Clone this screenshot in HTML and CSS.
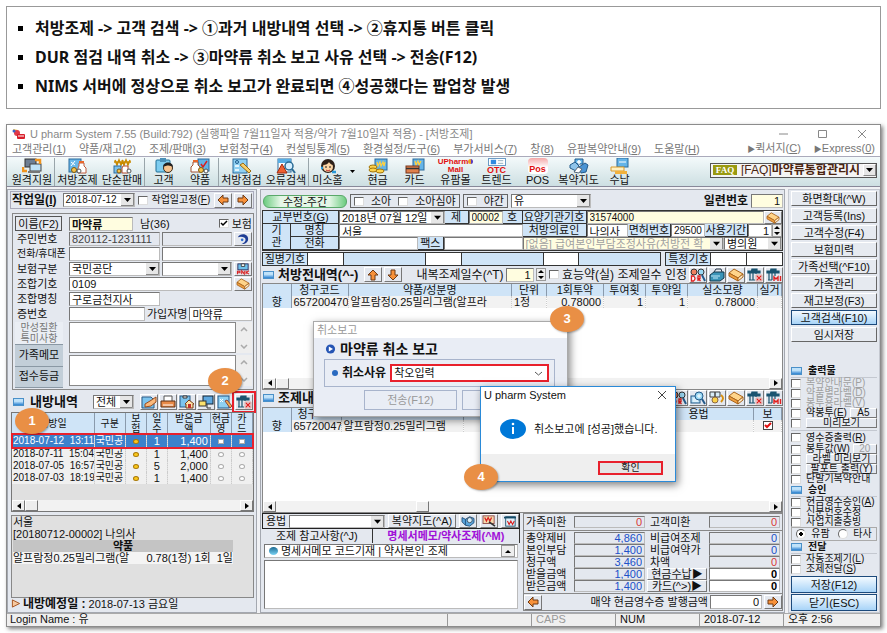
FILE: index.html
```html
<!DOCTYPE html>
<html lang="ko">
<head>
    <meta charset="UTF-8">
    <title>U pharm System</title>
    <link rel="stylesheet" href="styles.css">
</head>
<body>
<svg class="sprite" aria-hidden="true">
    <symbol id="i-app" viewBox="0 0 14 12"><path d="M1 1l5 1 2 4-4 1z" fill="#f5c542"/><circle cx="5" cy="5" r="3" fill="#e03a4a"/><rect x="5" y="6" width="8" height="5" rx="1" fill="#d8202c"/><path d="M6 8h6" stroke="#fff"/><circle cx="2" cy="3" r="1.5" fill="#3a62c8"/></symbol>
    <symbol id="i-remote" viewBox="0 0 20 16"><rect x="3" y="1" width="11" height="8" fill="#6d7f94" stroke="#333"/><rect x="8" y="6" width="11" height="7" fill="#bfe2f6" stroke="#444"/><path d="M6 15h12v-2H6z" fill="#777"/><path d="M1 9v4h4M13 2h5v4" stroke="#f0941e" stroke-width="2.5" fill="none"/></symbol>
    <symbol id="i-rx" viewBox="0 0 20 16"><rect x="1" y="1" width="12" height="13" fill="#6bb8ea" stroke="#2b6a9c"/><path d="M3 4l4 3M7 3L3 8" stroke="#fff"/><path d="M11 5h5v3l2 2v5h-8v-5l1-2z" fill="#fff" stroke="#c05a3c"/><path d="M11 4h5" stroke="#e8682c" stroke-width="2"/><circle cx="6" cy="12" r="2.5" fill="#f6c14a" stroke="#7c5a10"/><circle cx="11" cy="13" r="2" fill="#fff" stroke="#555"/></symbol>
    <symbol id="i-sale" viewBox="0 0 20 16"><path d="M3 2l2 5 2-5 2 5 2-5M10 2l2 5 2-5 2 5 2-5M2 4h17" stroke="#c98a00" stroke-width="1.5" fill="none"/><rect x="2" y="8" width="7" height="7" fill="#7cc0ea" stroke="#2b6a9c"/><path d="M11 8h5v7h-6v-5z" fill="#fff" stroke="#b34a2c"/><circle cx="7" cy="13" r="2" fill="#f6c14a" stroke="#7c5a10"/><circle cx="17" cy="13" r="2" fill="#fff" stroke="#555"/></symbol>
    <symbol id="i-customer" viewBox="0 0 20 16"><rect x="2" y="2" width="14" height="12" rx="1" fill="#7ecdf0" stroke="#1f6f96"/><rect x="6" y="0" width="6" height="4" fill="#4a90b8"/><circle cx="14" cy="10" r="4.5" fill="#f7c48e" stroke="#3a2a1a"/><path d="M9 9c0-6 10-6 10 0-3-2-6-2-10 0z" fill="#222"/></symbol>
    <symbol id="i-drug" viewBox="0 0 20 16"><rect x="8" y="1" width="11" height="12" fill="#63b3e6" stroke="#2b6a9c"/><path d="M11 6l2 3 4-6" stroke="#d82020" stroke-width="1.5" fill="none"/><path d="M3 4h5v3l2 2v5H1V9l2-2z" fill="#fff" stroke="#a05030"/><path d="M3 3h5" stroke="#e8682c" stroke-width="2"/><circle cx="11" cy="12" r="2.5" fill="#f6c14a" stroke="#7c5a10"/><circle cx="16" cy="13" r="2" fill="#fff" stroke="#555"/></symbol>
    <symbol id="i-check" viewBox="0 0 20 16"><rect x="1" y="1" width="14" height="14" fill="#8fd0f2" stroke="#2b6a9c"/><circle cx="5" cy="4" r="1.5" fill="none" stroke="#1f5c8c"/><path d="M3 8h4M3 12h4" stroke="#fff" stroke-width="1.5"/><path d="M8 7l3-2 8 8-2 2z" fill="#f8cf6a" stroke="#996a10"/></symbol>
    <symbol id="i-error" viewBox="0 0 20 16"><rect x="2" y="1" width="13" height="13" fill="#fff" stroke="#2b6a9c"/><rect x="2" y="1" width="13" height="4" fill="#58aee4"/><path d="M6 6l5 9H1z" fill="#f06030" stroke="#a02a10"/><circle cx="13" cy="8" r="4" fill="#d4efff" stroke="#286a94" stroke-width="1.5"/><path d="M16 11l3 4" stroke="#286a94" stroke-width="2"/></symbol>
    <symbol id="i-smile" viewBox="0 0 20 16"><circle cx="10" cy="8" r="7" fill="#2e2019"/><circle cx="10" cy="9" r="5" fill="#fad3a4"/><path d="M5 7c3 0 5-1 6-3 1 2 3 3 4 3-1-5-9-5-10 0z" fill="#2e2019"/><path d="M8 12q2 2 4 0" stroke="#c23030" fill="none"/><circle cx="8" cy="9" r=".8"/><circle cx="12" cy="9" r=".8"/><path d="M3 10h2M14 14h4" stroke="#2a9ad8" stroke-width="2.5"/></symbol>
    <symbol id="i-cash" viewBox="0 0 20 16"><rect x="7" y="1" width="12" height="11" fill="#64b4e8" stroke="#2b6a9c"/><path d="M9 4l1 4 2-4 1 4 2-4 1 4 1-4" stroke="#ffd040" stroke-width="1.2" fill="none"/><ellipse cx="5" cy="9" rx="4" ry="2" fill="#fbd24c" stroke="#a0740c"/><ellipse cx="5" cy="12" rx="4" ry="2" fill="#fbd24c" stroke="#a0740c"/><ellipse cx="12" cy="13" rx="4" ry="2" fill="#fbd24c" stroke="#a0740c"/></symbol>
    <symbol id="i-card" viewBox="0 0 20 16"><rect x="8" y="1" width="11" height="11" fill="#64b4e8" stroke="#2b6a9c"/><path d="M10 3l1 4 2-4 1 4 2-4" stroke="#ffd040" stroke-width="1.2" fill="none"/><rect x="1" y="8" width="13" height="7" fill="#e0804c" stroke="#77351a"/><path d="M1 10.5h13" stroke="#333" stroke-width="1.5"/></symbol>
    <symbol id="i-otc" viewBox="0 0 20 9"><rect x=".5" y=".5" width="19" height="8" fill="#fff" stroke="#5a8fbe"/><rect x="3" y="2" width="6" height="5" fill="#2e8ae0"/><path d="M11 3h6M11 6h6" stroke="#8ab"/></symbol>
    <symbol id="i-guide" viewBox="0 0 20 16"><path d="M6 1h8v5H6z" fill="#66b6ea" stroke="#235a8a"/><path d="M10 2v4M8 4h4" stroke="#fff" stroke-width="1.5"/><path d="M1 7l5-3 4 4-3 5-6-3z" fill="#8fc4ea" stroke="#235a8a"/><path d="M10 9l6-4 3 2-2 7-5 1z" fill="#4a94d4" stroke="#235a8a"/><path d="M5 14l4-5 4 2-3 4z" fill="#fff" stroke="#567"/></symbol>
    <symbol id="i-pay" viewBox="0 0 20 16"><rect x="7" y="0" width="11" height="9" fill="#64b4e8" stroke="#2b6a9c"/><path d="M9 4h7" stroke="#fff"/><path d="M1 9h13v4H1z" fill="#fff0c0" stroke="#d89a2c"/><path d="M5 13h12v3H5z" fill="#f2b13c"/></symbol>
    <symbol id="i-left" viewBox="0 0 12 12"><path d="M1 6l5-5v3h5v4H6v3z" fill="#f7913a" stroke="#6e3a14"/></symbol>
    <symbol id="i-right" viewBox="0 0 12 12"><path d="M11 6L6 1v3H1v4h5v3z" fill="#f7913a" stroke="#6e3a14"/></symbol>
    <symbol id="i-up" viewBox="0 0 12 12"><path d="M6 1l5 5H8v5H4V6H1z" fill="#f7913a" stroke="#6e3a14"/></symbol>
    <symbol id="i-down" viewBox="0 0 12 12"><path d="M6 11L1 6h3V1h4v5h3z" fill="#f7913a" stroke="#6e3a14"/></symbol>
    <symbol id="i-book" viewBox="0 0 16 14"><path d="M1 5l5-4 9 5-5 4z" fill="#ffd48a" stroke="#a8641c"/><path d="M1 5v3l9 5v-3z" fill="#f0a040" stroke="#a8641c"/><path d="M10 13l5-4V6l-5 4z" fill="#fff0d0" stroke="#a8641c"/></symbol>
    <symbol id="i-swirl" viewBox="0 0 16 14"><path d="M2 5c2-5 12-5 12 2 0 5-5 6-8 6 3-1 5-3 5-5 0-4-6-4-9-3z" fill="#1d3c94"/><circle cx="7" cy="8" r="1.5" fill="#2a6ad0"/></symbol>
    <symbol id="i-pnk" viewBox="0 0 16 14"><rect x="2" y="1" width="12" height="7" fill="#6fc0ea" stroke="#225"/><path d="M6 1h4v3H6z" fill="#fff" stroke="#333"/><path d="M1.5 13V9.500h3v2h-3M6.500 13V9l3 4V9M11.500 9v4M15 9l-3 2 3 2" stroke="#d82020" stroke-width="1.2" fill="none"/></symbol>
    <symbol id="i-note" viewBox="0 0 16 14"><path d="M1 2h9l3 3v8H1z" fill="#7cc4ee" stroke="#2b5a84"/><path d="M4 9l5-3 6-4v5l-5 4-6 1z" fill="#f9b97c" stroke="#9c4c1c"/></symbol>
    <symbol id="i-print" viewBox="0 0 16 14"><path d="M4 1h8v6H4z" fill="#fff" stroke="#555"/><path d="M1 6h14v6H1z" fill="#e88a48" stroke="#5a2e14"/><path d="M3 10h10" stroke="#fff"/></symbol>
    <symbol id="i-clip" viewBox="0 0 16 14"><rect x="1" y="1" width="10" height="11" fill="#7cc4ee" stroke="#2b5a84"/><path d="M4 1h4v2H4z" fill="#fff" stroke="#333"/><path d="M10 5l5 4h-1v4H7V9H6z" fill="#fbe1a4" stroke="#7c3c14"/><path d="M9 9h3v4H9z" fill="#c23030"/></symbol>
    <symbol id="i-pc" viewBox="0 0 16 14"><rect x="5" y="1" width="10" height="8" fill="#5ea8e0" stroke="#123"/><rect x="1" y="6" width="7" height="5" fill="#fbe06c" stroke="#333"/><path d="M9 9v4h4" stroke="#333" fill="none"/></symbol>
    <symbol id="i-edit" viewBox="0 0 16 14"><rect x="1" y="1" width="11" height="12" fill="#8fd0f2" stroke="#235a8a"/><path d="M3 4l3 3M6 4L3 7" stroke="#fff"/><path d="M8 6l2-1 5 6-2 2z" fill="#f6b04a" stroke="#844"/></symbol>
    <symbol id="i-trash" viewBox="0 0 16 14"><path d="M4 2h6V1H5v1M1 3h12v2H1zM3 5v7M6 5v7M9 5v7M2 12h8" stroke="#1a5470" stroke-width="1.2" fill="#1a5470"/><rect x="8" y="6" width="8" height="8" fill="#fff"/><rect x="9" y="7" width="6" height="6" fill="#fde4e4" stroke="#c89a9a"/><path d="M10 8l4 4M14 8l-4 4" stroke="#e02020" stroke-width="1.2"/></symbol>
    <symbol id="i-trashall" viewBox="0 0 16 14"><path d="M4 2h6V1H5v1M1 3h12v2H1zM3 5v7M6 5v7M9 5v3M2 12h4" stroke="#1a5470" stroke-width="1.2" fill="#1a5470"/><path d="M8 13V9l2 2 2-2v4M14.500 8v5" stroke="#e02020" stroke-width="1.4" fill="none"/></symbol>
    <symbol id="i-dr" viewBox="0 0 16 14"><circle cx="4" cy="4" r="3" fill="#f08060" stroke="#333"/><circle cx="11" cy="4" r="3" fill="#9ad8f4" stroke="#333"/><path d="M1.500 13V8h2q3 2.500 0 5zM8 13V8h2v2.500H8l2.500 2.500" stroke="#e02020" stroke-width="1.300" fill="#fff"/><path d="M12 7l3 6" stroke="#235a8a" stroke-width="2"/></symbol>
    <symbol id="i-bag" viewBox="0 0 16 14"><path d="M5 4l2-3h5l1 3" fill="none" stroke="#234"/><path d="M1 7l4-3h10v6l-4 3H1z" fill="#3a94b8" stroke="#12384c"/><path d="M2 8h9M4 10h5" stroke="#bfe8f8"/></symbol>
    <symbol id="i-find" viewBox="0 0 16 14"><rect x="1" y="5" width="9" height="7" fill="#bfe2f6" stroke="#235a8a"/><path d="M3 8h5M3 10h5" stroke="#fff"/><circle cx="9" cy="5" r="4" fill="#9ad8f4" stroke="#235a8a"/><path d="M7 5h4M9 3v4" stroke="#fff"/><path d="M12 8l3 5" stroke="#235a8a" stroke-width="2"/></symbol>
    <symbol id="i-boxes" viewBox="0 0 16 14"><path d="M1 1h5v5H1zM6 1h5v5H6z" fill="#d8ecf8" stroke="#444"/><circle cx="6" cy="9" r="3" fill="#fbd24c" stroke="#864"/><path d="M12 4q4 3 0 7" stroke="#d89010" stroke-width="2" fill="none"/></symbol>
    <symbol id="i-won" viewBox="0 0 16 14"><rect x="1" y="1" width="13" height="9" fill="#f6d9ac" stroke="#844"/><path d="M3 3l2 4 2-4 2 4 2-4" stroke="#d82020" stroke-width="1.500" fill="none"/><path d="M8 8l7 5" stroke="#333" stroke-width="2"/></symbol>
    <symbol id="i-cal" viewBox="0 0 16 14"><rect x="3" y="2" width="11" height="11" fill="#dff0fa" stroke="#144a66"/><path d="M1 3h14" stroke="#144a66" stroke-width="2"/><path d="M5 7l2 4 2-4 2 4 2-4" stroke="#d82020" stroke-width="1.300" fill="none"/></symbol>
    <symbol id="i-map" viewBox="0 0 16 14"><path d="M1 3l4 2 5-3 5 2v5l-5 4-5-1-4-4z" fill="#5aa4dc" stroke="#1c4a74"/><path d="M5 5v7" stroke="#1c4a74"/><circle cx="10" cy="6" r="3" fill="#d8f0fc" stroke="#345"/></symbol>
    <symbol id="i-flag" viewBox="0 0 10 10"><path d="M1 1l8 4-8 4z" fill="#f6c9a0" stroke="#a04a14"/></symbol>
    <symbol id="i-play" viewBox="0 0 12 12"><circle cx="6" cy="6" r="5.5" fill="#2454b4"/><path d="M4 3l5 3-5 3z" fill="#fff"/></symbol>
    <symbol id="i-info" viewBox="0 0 26 20"><ellipse cx="13" cy="10" rx="13" ry="10" fill="#0078d7"/><path d="M13 8v7" stroke="#fff" stroke-width="2"/><circle cx="13" cy="5" r="1.300" fill="#fff"/></symbol>
    <symbol id="i-close" viewBox="0 0 10 10"><path d="M1 1l8 8M9 1L1 9" stroke="#444" fill="none"/></symbol>
</svg>

<ul class="notes">
    <li>처방조제 -&gt; 고객 검색 -&gt; ①과거 내방내역 선택 -&gt; ②휴지통 버튼 클릭</li>
    <li>DUR 점검 내역 취소 -&gt; ③마약류 취소 보고 사유 선택 -&gt; 전송(F12)</li>
    <li>NIMS 서버에 정상으로 취소 보고가 완료되면 ④성공했다는 팝업창 발생</li>
</ul>

<main class="window">
    <header class="titlebar">
        <svg class="app-icon"><use href="#i-app"/></svg>
        <span class="title">U pharm System 7.55 (Build:792) (실행파일 7월11일자 적용/약가 7월10일자 적용) - [처방조제]</span>
        <svg class="win-controls" viewBox="0 0 90 10"><path d="M1 5h9M40.500 1.500h8v7h-8zM80 1l8 8M88 1l-8 8" fill="none" stroke="#888"/></svg>
    </header>
    <nav class="menubar">
        <a href="#">고객관리(<u>1</u>)</a><a href="#">약품/재고(<u>2</u>)</a><a href="#">조제/판매(<u>3</u>)</a><a href="#">보험청구(<u>4</u>)</a><a href="#">컨설팅통계(<u>5</u>)</a><a href="#">환경설정/도구(<u>6</u>)</a><a href="#">부가서비스(<u>7</u>)</a><a href="#">창(<u>8</u>)</a><a href="#">유팜복약안내(<u>9</u>)</a><a href="#">도움말(<u>H</u>)</a>
        <a href="#" class="push"><small>▶</small>퀵서지(<u>C</u>)</a><a href="#"><small>▶</small>Express(<u>0</u>)</a>
    </nav>
    <div class="toolbar">
        <button class="tool wide sep"><svg><use href="#i-remote"/></svg>원격지원</button>
        <button class="tool wide"><svg><use href="#i-rx"/></svg>처방조제</button>
        <button class="tool wide sep"><svg><use href="#i-sale"/></svg>단순판매</button>
        <button class="tool"><svg><use href="#i-customer"/></svg>고객</button>
        <button class="tool sep"><svg><use href="#i-drug"/></svg>약품</button>
        <button class="tool wide"><svg><use href="#i-check"/></svg>처방점검</button>
        <button class="tool wide sep"><svg><use href="#i-error"/></svg>오류검색</button>
        <button class="tool"><svg><use href="#i-smile"/></svg>미소홈</button>
        <span class="drop"></span>
        <button class="tool"><svg><use href="#i-cash"/></svg>현금</button>
        <button class="tool"><svg><use href="#i-card"/></svg>카드</button>
        <button class="tool wide"><span class="mall">UPharm<i></i><br>Mall</span>유팜몰</button>
        <button class="tool"><span class="otc"><svg><use href="#i-otc"/></svg>OTC</span>트렌드</button>
        <button class="tool wide"><span class="pos">Pos</span>POS</button>
        <button class="tool"><svg><use href="#i-guide"/></svg>복약지도</button>
        <button class="tool wide"><svg><use href="#i-pay"/></svg>수납</button>
        <button class="faq"><span class="faq-tag">FAQ</span><span class="faq-text">[FAQ]<b>마약류통합관리시</b></span><span class="arrow"></span></button>
    </div>

    <div class="workspace">
        <section class="left">
            <div class="workdate">
                <label for="workdate"><b>작업일(<u>I</u>)</b></label>
                <select id="workdate" class="field"><option>2018-07-12</option></select>
                <label class="check"><input type="checkbox">작업일고정(<u>F</u>)</label>
                <button class="icon push" aria-label="이전"><svg><use href="#i-left"/></svg></button>
                <button class="icon" aria-label="다음"><svg><use href="#i-right"/></svg></button>
            </div>

            <div class="customer">
                <div class="row">
                    <button class="name-btn">이름(F2)</button>
                    <input class="field yellow name" aria-label="이름" value="마약류">
                    <span class="sex">남(36)</span>
                    <label class="check push"><input type="checkbox" checked>보험</label>
                </div>
                <div class="row"><label for="ssn">주민번호</label><input id="ssn" class="field gray half" value="820112-1231111"><input class="field gray grow" aria-label="주민번호 확인"><button class="icon flat" aria-label="조회"><svg><use href="#i-swirl"/></svg></button></div>
                <div class="row"><label for="tel" class="tight">전화/휴대폰</label><input id="tel" class="field half"><input class="field grow" aria-label="휴대폰"></div>
                <div class="row"><label for="ins">보험구분</label><select id="ins" class="field half"><option>국민공단</option></select><select class="field grow" aria-label="보험 세부"><option></option></select><button class="icon flat" aria-label="PNK"><svg><use href="#i-pnk"/></svg></button></div>
                <div class="row"><label for="code">조합기호</label><input id="code" class="field grow" value="0109"><button class="icon flat" aria-label="조합 찾기"><svg><use href="#i-book"/></svg></button></div>
                <div class="row"><label for="union">조합명칭</label><input id="union" class="field half" value="구로금천지사"></div>
                <div class="row"><label for="cert">증번호</label><input id="cert" class="field cert"><label for="owner">가입자명</label><input id="owner" class="field grow" value="마약류"></div>
                <div class="memo">
                    <div class="memo-tabs">
                        <button class="on">만성질환<br>특미사항</button>
                        <button>가족메모</button>
                        <button>접수등금</button>
                    </div>
                    <div class="memo-text">
                        <div class="area"><textarea aria-label="만성질환"></textarea><span class="vbar"></span></div>
                        <div class="area"><textarea aria-label="가족메모"></textarea><span class="vbar"></span></div>
                    </div>
                </div>
            </div>

            <div class="list-head">
                <i class="mark"></i><b>내방내역</b>
                <select class="field" aria-label="내방내역 범위"><option>전체</option></select>
                <span class="icons">
                    <button class="icon" aria-label="메모"><svg><use href="#i-note"/></svg></button><button class="icon" aria-label="인쇄"><svg><use href="#i-print"/></svg></button><button class="icon" aria-label="약국"><svg><use href="#i-clip"/></svg></button><button class="icon" aria-label="전송"><svg><use href="#i-pc"/></svg></button><button class="icon" aria-label="수정"><svg><use href="#i-edit"/></svg></button><button class="icon marked" aria-label="휴지통"><svg><use href="#i-trash"/></svg></button>
                </span>
            </div>
            <div class="visits">
                <table>
                    <colgroup><col class="v-date"><col class="v-kind"><col class="v-one"><col class="v-one"><col class="v-pay"><col class="v-one"><col class="v-one"></colgroup>
                    <thead><tr><th>내방일</th><th>구분</th><th>보<br>험</th><th>일<br>수</th><th>받은금<br>액</th><th>현금<br>영</th><th>카<br>드</th></tr></thead>
                    <tbody>
                    <tr class="picked"><td>2018-07-12 &nbsp;13:11</td><td>국민공</td><td><i class="dot gold"></i></td><td>1</td><td>1,400</td><td><i class="dot sq"></i></td><td><i class="dot sq"></i></td></tr>
                    <tr><td>2018-07-11 &nbsp;15:04</td><td>국민공</td><td><i class="dot gold"></i></td><td>1</td><td>1,400</td><td><i class="dot"></i></td><td><i class="dot"></i></td></tr>
                    <tr><td>2018-07-05 &nbsp;16:57</td><td>국민공</td><td><i class="dot gold"></i></td><td>5</td><td>2,000</td><td><i class="dot"></i></td><td><i class="dot"></i></td></tr>
                    <tr><td>2018-07-03 &nbsp;18:19</td><td>국민공</td><td><i class="dot gold"></i></td><td>1</td><td>1,400</td><td><i class="dot"></i></td><td><i class="dot"></i></td></tr>
                    </tbody>
                </table>
                <div class="hbar"><i class="prev"></i><i class="thumb"></i><i class="next"></i></div>
            </div>
            <div class="detail">
                <p>서울</p>
                <p>[20180712-00002] 나의사</p>
                <p class="band">약품</p>
                <p class="drug"><span>알프람정0.25밀리그램(알</span><span>0.78(1정) 1회 &nbsp;1일</span></p>
            </div>
            <p class="next-visit"><svg><use href="#i-flag"/></svg><b>내방예정일 :</b> 2018-07-13 금요일</p>
        </section>

        <section class="middle">
            <div class="mode">
                <button class="green">수정-주간</button>
                <span class="group"><label class="check"><input type="checkbox">소아</label><label class="check"><input type="checkbox">소아심야</label></span>
                <span class="group"><label class="check"><input type="checkbox">야간</label></span>
                <select class="field who" aria-label="약사"><option>유</option></select>
                <label for="serial" class="push"><b>일련번호</b></label>
                <input id="serial" class="field yellow serial num" value="1">
            </div>

            <div class="rx">
                <div class="rx-left">
                    <div class="line"><label for="issue" class="tag w76">교부번호(<u>G</u>)</label><select id="issue" class="field grow"><option>2018년 07월 12일</option></select><span class="tag w24">제</span><input class="field yellow small w34" aria-label="번호" value="00002"><span class="tag w20">호</span></div>
                    <div class="org">
                        <span class="tag org-name">기<br>관</span>
                        <div class="grow">
                            <div class="line"><label for="org" class="tag w48">명칭</label><input id="org" class="field grow" value="서울"></div>
                            <div class="line"><label for="orgtel" class="tag w48">전화</label><input id="orgtel" class="field grow"><label for="fax" class="tag w26">팩스</label><input id="fax" class="field grow"></div>
                        </div>
                    </div>
                </div>
                <div class="rx-right">
                    <div class="line"><label for="inst" class="tag w64">요양기관기호</label><input id="inst" class="field yellow small grow" value="31574000"><button class="icon flat" aria-label="기관 찾기"><svg><use href="#i-book"/></svg></button></div>
                    <div class="line"><label for="doctor" class="tag w64">처방의료인</label><input id="doctor" class="field grow" value="나의사"><label for="lic" class="tag w43">면허번호</label><input id="lic" class="field small w34" value="29500"><label for="period" class="tag w43">사용기간</label><input id="period" class="field num w24" value="1"><i class="spin"></i></div>
                    <div class="line"><select class="field yellow dim grow" aria-label="본인부담"><option>[없음] 급여본인부담조정사유(처방전 확</option></select><select class="field w58" aria-label="기관 종류"><option>병의원</option></select></div>
                </div>
            </div>
            <div class="disease"><span class="tag">질병기호</span><i></i><i class="b"></i><i></i><i class="b"></i><i></i><i class="b"></i><s></s><span class="tag">특정기호</span><i></i><i></i></div>

            <div class="sect-head">
                <i class="mark"></i><b>처방전내역(^-)</b>
                <button class="icon" aria-label="위로"><svg><use href="#i-up"/></svg></button><button class="icon" aria-label="아래로"><svg><use href="#i-down"/></svg></button>
                <label for="days" class="days">내복조제일수(^T)</label><input id="days" class="field yellow num w28" value="1"><i class="spin"></i>
                <label class="check push"><input type="checkbox">효능약(실) 조제일수 인정</label>
                <span class="icons"><button class="icon" aria-label="DR"><svg><use href="#i-dr"/></svg></button><button class="icon" aria-label="가방"><svg><use href="#i-bag"/></svg></button><button class="icon" aria-label="약품"><svg><use href="#i-book"/></svg></button><button class="icon" aria-label="삭제"><svg><use href="#i-trash"/></svg></button><button class="icon" aria-label="전체 삭제"><svg><use href="#i-trashall"/></svg></button></span>
            </div>
            <div class="grid">
                <table>
                    <colgroup><col class="c28"><col class="c57"><col><col class="c35"><col class="c57"><col class="c42"><col class="c42"><col class="c70"><col class="c24"></colgroup>
                    <thead><tr><th></th><th>청구코드</th><th>약품/성분명</th><th>단위</th><th>1회투약</th><th>투여횟</th><th>투약일</th><th>실소모량</th><th>실거</th></tr></thead>
                    <tbody><tr><th>향</th><td>657200470</td><td class="drugname">알프람정0.25밀리그램(알프라</td><td>1정</td><td class="num">0.78000</td><td class="num">1</td><td class="num">1</td><td class="num">0.78000</td><td></td></tr></tbody>
                </table>
                <div class="hbar"><i class="prev"></i><i class="thumb"></i><i class="next"></i></div>
            </div>

            <div class="sect-head">
                <i class="mark"></i><b>조제내</b>
                <span class="icons push"><button class="icon" aria-label="DR 조회"><svg><use href="#i-dr"/></svg></button><button class="icon" aria-label="찾기"><svg><use href="#i-find"/></svg></button><button class="icon" aria-label="교환"><svg><use href="#i-boxes"/></svg></button><button class="icon" aria-label="약품"><svg><use href="#i-book"/></svg></button><button class="icon" aria-label="삭제"><svg><use href="#i-trash"/></svg></button><button class="icon" aria-label="전체 삭제"><svg><use href="#i-trashall"/></svg></button></span>
            </div>
            <div class="grid">
                <table>
                    <colgroup><col class="c28"><col class="c50"><col class="c122"><col><col class="c110"><col class="c28"></colgroup>
                    <thead><tr><th></th><th class="cut">청구</th><th></th><th></th><th>용법</th><th>보</th></tr></thead>
                    <tbody><tr><th>향</th><td>65720047</td><td class="drugname">알프람정0.25밀리그램</td><td></td><td></td><td><input type="checkbox" class="red" aria-label="보험" checked></td></tr></tbody>
                </table>
                <div class="hbar"><i class="prev"></i><i class="thumb far"></i><i class="next"></i></div>
            </div>

            <div class="bottom">
                <div class="usage">
                    <div class="usage-bar"><label for="usage">용법</label><select id="usage" class="field grow"><option></option></select><button class="guide">복약지도(^A)</button><button class="icon" aria-label="지도"><svg><use href="#i-map"/></svg></button><button class="icon" aria-label="금액"><svg><use href="#i-won"/></svg></button><button class="icon" aria-label="달력"><svg><use href="#i-cal"/></svg></button></div>
                    <div class="tabs"><button>조제 참고사항(^J)</button><button class="on">명세서메모/약사조제(^M)</button></div>
                    <div class="memo-line field"><i class="ball"></i>명세서메모 코드기재 | 약사본인 조제<i class="upbtn"></i></div>
                    <textarea class="field" aria-label="명세서메모"></textarea>
                </div>
                <div class="totals">
                    <div class="sums due">
                        <label for="t1">가족미환</label><input id="t1" class="field num red-t" value="0"><label for="t2">고객미환</label><input id="t2" class="field num red-t" value="0">
                    </div>
                    <div class="sums">
                        <label for="t3">총약제비</label><input id="t3" class="field num" value="4,860"><label for="t4">비급여조제</label><input id="t4" class="field num" value="0">
                        <label for="t5">본인부담</label><input id="t5" class="field num" value="1,400"><label for="t6">비급여약가</label><input id="t6" class="field num" value="0">
                        <label for="t7">청구액</label><input id="t7" class="field num" value="3,460"><label for="t8">차액</label><input id="t8" class="field num red-t" value="0">
                        <label for="t9">받을금액</label><input id="t9" class="field num" value="1,400"><button>현금수납▶</button><input class="field num cash" aria-label="현금수납" value="0">
                        <label for="t10">받은금액</label><input id="t10" class="field num" value="1,400"><button>카드(^&gt;)▶</button><input class="field num cash" aria-label="카드" value="0">
                    </div>
                    <div class="receipt"><button class="icon" aria-label="이전"><svg><use href="#i-left"/></svg></button><label for="rcpt" class="push">매약 현금영수증 발행금액</label><input id="rcpt" class="field num w52" value="0"><button class="icon flat" aria-label="다음"><svg><use href="#i-right"/></svg></button></div>
                </div>
            </div>
        </section>

        <aside class="side">
            <div class="actions">
                <button>화면확대(^W)</button><button>고객등록(Ins)</button><button>고객수정(F4)</button><button>보험미력</button><button>가족선택(^F10)</button><button>가족관리</button><button>재고보정(F3)</button><button class="blue">고객검색(F10)</button><button>임시저장</button>
            </div>
            <div class="prints">
                <h3><i class="mark"></i>출력물</h3>
                <label class="check dim"><input type="checkbox" disabled>복약안내문(<u>P</u>)</label>
                <label class="check dim"><input type="checkbox" disabled>약품별라벨(<u>D</u>)</label>
                <label class="check dim"><input type="checkbox" disabled>봉투용라벨(<u>V</u>)</label>
                <div class="check"><input type="checkbox" id="bag"><label for="bag">약봉투(<u>E</u>)</label><button>A5</button></div>
                <div class="check"><input type="checkbox" aria-label="미리보기 사용"><button>미리보기</button></div>
                <label class="check rule"><input type="checkbox">영수증출력(<u>R</u>)</label>
                <div class="check"><input type="checkbox" id="bagfee"><label for="bagfee">봉투값(<u>W</u>)</label><button class="dim">20</button></div>
                <div class="check"><input type="checkbox" aria-label="라벨 미리보기 사용"><button>라벨 미리보기</button></div>
                <div class="check"><input type="checkbox" aria-label="팔포트 사용"><button>팔포트 출력(<u>Y</u>)</button></div>
                <label class="check"><input type="checkbox">단말기복약안내</label>
                <h3><i class="mark"></i>승인</h3>
                <label class="check"><input type="checkbox">현금영수승인(<u>A</u>)</label>
                <label class="check"><input type="checkbox">신분번호수정</label>
                <label class="check"><input type="checkbox">사업지출증빙</label>
                <div class="radios"><label class="check"><input type="radio" name="van" checked>유팜</label><label class="check"><input type="radio" name="van">타사</label></div>
                <h3><i class="mark"></i>전달</h3>
                <label class="check"><input type="checkbox">자동조제기(<u>L</u>)</label>
                <label class="check"><input type="checkbox">조제전달(<u>S</u>)</label>
            </div>
            <div class="actions last">
                <button class="blue">저장(F12)</button><button class="blue">닫기(ESC)</button>
            </div>
        </aside>
    </div>

    <footer class="status"><span class="login">Login Name : 유</span><span></span><span class="caps">CAPS</span><span>NUM</span><span class="date">2018-07-12</span><span>오후 2:56</span></footer>

    <section class="dialog cancel" role="dialog" aria-label="취소보고">
        <header>취소보고</header>
        <h2><svg><use href="#i-play"/></svg>마약류 취소 보고</h2>
        <div class="reason"><i></i><label for="reason">취소사유</label><select id="reason"><option>착오입력</option></select></div>
        <div class="dialog-btns"><button>전송(F12)</button><button aria-label="닫기"></button></div>
    </section>

    <section class="dialog message" role="dialog" aria-label="U pharm System">
        <header>U pharm System<button aria-label="닫기"><svg><use href="#i-close"/></svg></button></header>
        <p><svg><use href="#i-info"/></svg>취소보고에 [성공]했습니다.</p>
        <footer><button>확인</button></footer>
    </section>

    <span class="badge n1">1</span>
    <span class="badge n2">2</span>
    <span class="badge n3">3</span>
    <span class="badge n4">4</span>
</main>
</body>
</html>
```
FILE: styles.css
```css
* {
    box-sizing: border-box;
}
body {
    margin: 0;
    min-height: 100vh;
    display: flex;
    flex-direction: column;
    background: #fff;
    color: #111;
    font: 11px/12px "Liberation Sans", "Noto Sans CJK KR", sans-serif;
}
p, h2, h3 {
    margin: 0;
}
button, input, select, textarea {
    font: inherit;
    color: inherit;
    margin: 0;
    padding: 0;
    min-width: 0;
    border-radius: 0;
}
button, label, span, th, td, a {
    white-space: nowrap;
}
i, s {
    font-style: normal;
    text-decoration: none;
}
.sprite {
    position: absolute;
    width: 0;
    height: 0;
}
.push {
    margin-left: auto;
}
.grow {
    flex: 1;
}
.num {
    text-align: right;
}
.dim {
    color: #a0a0a0;
}

/* notes above the window */
.notes {
    margin: 6px 6px 0 6px;
    padding: 7px 0 7px 28px;
    border: 1px solid #999;
    list-style: none;
    font: bold 16px/29px "Noto Sans", "Noto Sans CJK KR", sans-serif;
}
.notes li {
    position: relative;
}
.notes li::before {
    content: "";
    position: absolute;
    left: -17px;
    top: 12px;
    width: 5px;
    height: 5px;
    background: #000;
}

/* window frame */
.window {
    position: relative;
    flex: 1;
    display: flex;
    flex-direction: column;
    margin: 15px 6px 6px;
    border: 1px solid #8c8c8c;
    background: #e4e8ef;
    box-shadow: 2px 2px 4px rgba(0, 0, 0, .5);
}
.titlebar {
    display: flex;
    align-items: center;
    height: 17px;
    padding: 0 12px 0 5px;
    background: #fff;
    color: #888;
}
.app-icon {
    width: 14px;
    height: 12px;
    margin-right: 4px;
}
.win-controls {
    width: 90px;
    height: 10px;
    margin-left: auto;
}
.menubar {
    display: flex;
    align-items: center;
    gap: 13px;
    height: 14px;
    padding: 0 5px;
    background: #fff;
}
.menubar a {
    color: #777;
    text-decoration: none;
}
.menubar small {
    font-size: 8px;
}
.toolbar {
    display: flex;
    align-items: center;
    height: 31px;
    padding: 0 3px;
    background: linear-gradient(#f4fafb, #cddfe2);
    border-top: 1px solid #aab;
    border-bottom: 1px solid #889;
}
.tool {
    display: flex;
    flex-direction: column;
    align-items: center;
    justify-content: flex-end;
    width: 37px;
    height: 28px;
    border: 0;
    background: none;
    line-height: 12px;
}
.tool.wide {
    width: 45px;
}
.tool.sep {
    border-right: 1px solid #99a5aa;
}
.tool svg {
    width: 20px;
    height: 16px;
}
.tool .mall, .tool .otc, .tool .pos {
    height: 16px;
    color: #e01010;
    font-weight: bold;
    font-size: 9px;
    line-height: 8px;
}
.tool .mall {
    font-size: 8px;
}
.mall i {
    display: inline-block;
    width: 5px;
    height: 5px;
    border-radius: 50%;
    background: #f0a020;
    border-right: 2px solid #5a3ac0;
}
.tool .otc svg {
    display: block;
    height: 8px;
}
.tool .pos {
    width: 20px;
    padding-top: 7px;
    border-radius: 4px;
    background: linear-gradient(#f4a8a8, #fff 60%);
}
.drop {
    width: 13px;
    height: 4px;
    background: url("data:image/svg+xml,%3Csvg xmlns='http://www.w3.org/2000/svg' width='5' height='3'%3E%3Cpath d='M0 0h5L2.500 3z'/%3E%3C/svg%3E") no-repeat center;
}
.faq {
    display: flex;
    align-items: center;
    gap: 4px;
    width: 167px;
    height: 15px;
    margin: 0 0 3px auto;
    padding: 0 0 0 2px;
    border: 1px solid #555;
    background: #f4f4f4;
    color: #4a2410;
    font-size: 12px;
    overflow: hidden;
}
.faq-tag {
    flex: none;
    width: 24px;
    background: #9a9a10;
    color: #fff;
    font: bold 9px/10px "Liberation Serif", serif;
}
.faq-text {
    flex: 1;
    overflow: hidden;
    text-align: left;
}
.arrow {
    flex: none;
    width: 13px;
    height: 12px;
    background: #e6e6e6 url("data:image/svg+xml,%3Csvg xmlns='http://www.w3.org/2000/svg' width='7' height='4'%3E%3Cpath d='M0 0h7L3.500 4z'/%3E%3C/svg%3E") no-repeat center;
    border: 1px solid;
    border-color: #fff #888 #888 #fff;
}

/* shared controls */
.field {
    height: 14px;
    padding: 0 2px;
    border: 1px solid;
    border-color: #777 #bbb #bbb #777;
    background-color: #fff;
    line-height: 12px;
}
.field.small {
    font-size: 10px;
}
.field.yellow {
    background-color: #fffde0;
}
.field.gray {
    background-color: #e4e8ef;
    color: #444;
}
select.field {
    appearance: none;
    padding-right: 14px;
    background-image: url("data:image/svg+xml,%3Csvg xmlns='http://www.w3.org/2000/svg' width='13' height='12'%3E%3Cpath d='M0 0h13v12H0z' fill='%23e6e6e6'/%3E%3Cpath d='M12.500 0v11.500H0' fill='none' stroke='%23888'/%3E%3Cpath d='M3 4h7L6.500 8z'/%3E%3C/svg%3E");
    background-repeat: no-repeat;
    background-position: right center;
}
textarea {
    resize: none;
}
input[type="checkbox"], input[type="radio"] {
    flex: none;
    appearance: none;
    width: 10px;
    height: 9px;
    border: 1px solid;
    border-color: #666 #ddd #ddd #666;
    background: #fff no-repeat center;
}
input[type="checkbox"]:checked {
    background-image: url("data:image/svg+xml,%3Csvg xmlns='http://www.w3.org/2000/svg' width='8' height='7'%3E%3Cpath d='M1 3l2 2 4-4' fill='none' stroke='%23000' stroke-width='1.500'/%3E%3C/svg%3E");
}
input[type="checkbox"].red {
    display: block;
    margin: 0 auto;
    border-color: #444;
    background-image: url("data:image/svg+xml,%3Csvg xmlns='http://www.w3.org/2000/svg' width='8' height='7'%3E%3Cpath d='M1 3l2 2 4-4' fill='none' stroke='%23e01010' stroke-width='2'/%3E%3C/svg%3E");
}
input[type="radio"] {
    height: 10px;
    border-radius: 50%;
}
input[type="radio"]:checked {
    background-image: radial-gradient(#000 0 2px, transparent 2px);
}
.check {
    display: flex;
    align-items: center;
}
.check input[type] {
    margin-right: 3px;
}
.icon {
    display: flex;
    align-items: center;
    justify-content: center;
    flex: none;
    width: 18px;
    height: 15px;
    border: 1px solid;
    border-color: #fff #777 #777 #fff;
    background: #e4e8ef;
}
.icon svg {
    width: 16px;
    height: 12px;
}
.icon.flat {
    height: 14px;
}
.icons {
    display: flex;
    gap: 1px;
}
.icons .icon {
    height: 16px;
}
.icons .icon svg {
    height: 14px;
}
.mark {
    flex: none;
    width: 11px;
    height: 8px;
    border: 1px solid #4a90c8;
    background: linear-gradient(#bfe2fa 40%, #2a80d0);
}
.spin {
    flex: none;
    width: 10px;
    height: 13px;
    border: 1px solid #999;
    background: #eee url("data:image/svg+xml,%3Csvg xmlns='http://www.w3.org/2000/svg' width='6' height='9'%3E%3Cpath d='M0 3h6L3 0zM0 6h6L3 9z'/%3E%3C/svg%3E") no-repeat center;
}
.hbar {
    display: flex;
    height: 11px;
    background: #f2f2f2;
}
.hbar i {
    width: 13px;
    border: 1px solid;
    border-color: #fff #777 #777 #fff;
    background: #eee no-repeat center;
}
.hbar .prev {
    background-image: url("data:image/svg+xml,%3Csvg xmlns='http://www.w3.org/2000/svg' width='4' height='6'%3E%3Cpath d='M4 0v6L0 3z'/%3E%3C/svg%3E");
}
.hbar .next {
    margin-left: auto;
    background-image: url("data:image/svg+xml,%3Csvg xmlns='http://www.w3.org/2000/svg' width='4' height='6'%3E%3Cpath d='M0 0v6l4-3z'/%3E%3C/svg%3E");
}
.hbar .far {
    margin-left: 27%;
}

/* three columns */
.workspace {
    flex: 1;
    display: grid;
    grid-template-columns: 250px minmax(0, 1fr) 92px;
    gap: 3px;
    padding-top: 2px;
    background: #f0f1f4;
}
.left, .middle, .side {
    display: flex;
    flex-direction: column;
    min-width: 0;
    border: 1px solid #a4a8b0;
    background: #e4e8ef;
}
.left {
    padding: 1px 2px 0;
}
.middle {
    padding: 4px 1px 1px;
}
.side {
    padding: 1px 2px;
    border-color: #c4c8d0;
}

/* left column */
.workdate {
    display: flex;
    align-items: center;
    gap: 2px;
    height: 18px;
    padding: 0 1px;
    border: 1px solid #aab;
}
.workdate b {
    font-size: 12px;
}
.workdate select {
    flex: none;
    width: 72px;
    margin: 0 1px 0 5px;
    padding-left: 1px;
    font-size: 10px;
}
.workdate .check {
    font-size: 10px;
}
.customer {
    display: flex;
    flex-direction: column;
    gap: 1px;
    margin: 4px 0 2px 2px;
    padding: 2px 1px 1px 2px;
    border: 1px solid #888;
}
.customer .row {
    display: flex;
    align-items: center;
    gap: 2px;
}
.customer .row > label:first-child {
    width: 52px;
    padding-left: 2px;
}
.customer .row > .tight {
    padding-left: 0;
    font-size: 10px;
}
.name-btn {
    width: 47px;
    height: 15px;
    margin-right: 5px;
    border: 1px solid #555;
    background: #e4e8ef;
}
.field.name {
    width: 64px;
    font-weight: bold;
}
.sex {
    padding-left: 5px;
}
.half {
    width: 91px;
}
.cert {
    width: 76px;
}
.memo {
    display: flex;
    gap: 6px;
}
.memo-tabs {
    display: flex;
    flex-direction: column;
    width: 48px;
}
.memo-tabs button {
    flex: 1;
    border: 0;
    border-bottom: 1px solid #8a98a4;
    background: #c2ced8;
    line-height: 11px;
}
.memo-tabs .on {
    background: #eaeef4;
    color: #777;
    font-size: 10px;
}
.memo-text {
    flex: 1;
}
.area {
    display: flex;
    height: 33px;
    padding-bottom: 2px;
}
.area textarea {
    flex: 1;
    border: 1px solid #888;
}
.vbar {
    width: 16px;
    background: #eee url("data:image/svg+xml,%3Csvg xmlns='http://www.w3.org/2000/svg' width='8' height='22'%3E%3Cpath d='M1 4l3-3 3 3M1 18l3 3 3-3' fill='none' stroke='%23aaa' stroke-width='1.500'/%3E%3C/svg%3E") no-repeat center;
}
.list-head {
    display: flex;
    align-items: center;
    gap: 6px;
    height: 20px;
    padding-left: 3px;
}
.list-head b {
    font-size: 13px;
}
.list-head select {
    width: 41px;
    margin-left: auto;
}
.list-head .marked {
    outline: 2px solid #e8202c;
    outline-offset: 1px;
}
.list-head .icons {
    margin-right: 1px;
}
.visits {
    display: flex;
    flex-direction: column;
    height: 100px;
    margin-left: 1px;
    border: 1px solid #777;
    background: #e0e0e0;
}
.visits .hbar {
    margin-top: auto;
}
table {
    width: 100%;
    border-collapse: collapse;
    table-layout: fixed;
}
th, td {
    padding: 0;
    font-weight: normal;
    overflow: hidden;
}
thead th, .grid tbody th {
    background: #cfe4f7;
    border-right: 1px solid #8a9aac;
}
.visits th {
    height: 21px;
    font-size: 10px;
    line-height: 10px;
}
.visits td {
    height: 12px;
    padding: 0 2px;
    background: #f0f0f0;
    border-right: 1px dotted #ccc;
    line-height: 12px;
}
.visits td:first-child {
    padding: 0 0 0 1px;
    font-size: 10px;
}
.visits td:nth-child(2) {
    padding: 0 1px;
    font-size: 10px;
}
.visits td:nth-child(3), .visits td:nth-child(4), .visits td:nth-child(6), .visits td:nth-child(7) {
    text-align: center;
}
.visits td:nth-child(5) {
    text-align: right;
}
.visits .picked {
    outline: 2px solid #e8202c;
    outline-offset: -1px;
    color: #fff;
}
.visits .picked td {
    height: 14px;
    background: #3c82cc;
}
.v-date { width: 82px; }
.v-kind { width: 31px; }
.v-pay { width: 43px; }
.v-one { width: 21px; }
.dot {
    display: block;
    width: 6px;
    height: 5px;
    margin: 0 auto;
    border: 1px solid #aaa;
    border-radius: 50%;
    background: #fff;
}
.dot.gold {
    border-color: #a87808;
    background: #fbc81c;
}
.dot.sq {
    border-radius: 0;
}
.detail {
    flex: 1;
    margin: 3px 0 0 1px;
    padding: 0 20px 0 1px;
    border: 1px solid #888;
    background: #e0e0e0;
}
.detail .band {
    background: #c4c4c4;
    font-weight: bold;
    text-align: center;
}
.detail .drug {
    display: flex;
    justify-content: space-between;
    background: #f4f4f4;
}
.next-visit {
    height: 14px;
    padding-left: 1px;
}
.next-visit svg {
    width: 10px;
    height: 9px;
    margin-right: 2px;
}
.next-visit b {
    font-size: 12px;
}

/* middle column */
.mode {
    display: flex;
    align-items: center;
    gap: 3px;
    height: 14px;
    margin-bottom: 2px;
}
.green {
    width: 84px;
    height: 13px;
    margin-left: 1px;
    border: 1px solid #5aa86a;
    border-radius: 6px;
    background: linear-gradient(90deg, #6ccc80, #e4f6e6 20%, #e4f6e6 80%, #6ccc80);
}
.group {
    display: flex;
    gap: 7px;
    height: 14px;
    padding: 0 3px;
    border: 1px solid #666;
}
.group .check input {
    margin-right: 7px;
}
.who {
    width: 80px;
}
.mode b {
    font-size: 12px;
}
.serial {
    width: 32px;
}
.rx {
    display: flex;
    border: 1px solid #333;
}
.rx-left, .rx-right {
    flex: 1;
    min-width: 0;
}
.line {
    display: flex;
    height: 13px;
}
.line .field, .line .icon {
    height: 13px;
}
.tag {
    flex: none;
    border-right: 1px solid #333;
    border-bottom: 1px solid #333;
    background: #cfe4f7;
    text-align: center;
    line-height: 12px;
}
.org {
    display: flex;
}
.org > div {
    min-width: 0;
}
.org-name {
    width: 28px;
}
.w20 { width: 20px; }
.w24 { width: 24px; }
.w26 { width: 26px; }
.w28 { width: 28px; }
.w34 { width: 34px; }
.w43 { width: 43px; }
.w48 { width: 48px; }
.w52 { width: 52px; }
.w58 { width: 58px; }
.w64 { width: 64px; }
.w76 { width: 76px; }
.disease {
    display: flex;
    height: 14px;
    margin-top: 1px;
}
.disease > * {
    border: 1px solid #333;
    background: #fff;
}
.disease .tag {
    width: 46px;
    background: #cfe4f7;
}
.disease i {
    flex: 3;
    margin-left: -1px;
}
.disease .b {
    flex: 7;
    background: #cfe4f7;
}
.disease s {
    flex: none;
    width: 4px;
    border: 0;
    background: none;
}
.sect-head {
    display: flex;
    align-items: center;
    gap: 2px;
    height: 17px;
    padding: 0 0 0 1px;
}
.sect-head b {
    margin: 0 4px 0 2px;
    font-size: 13px;
}
.days {
    margin-left: 12px;
    font-size: 12px;
}
.sect-head .check {
    font-size: 12px;
}
.grid {
    flex: 1;
    display: flex;
    flex-direction: column;
    border: 1px solid #888;
    background: #fff;
}
.grid .hbar {
    margin-top: auto;
}
.grid th, .grid td {
    height: 12px;
    line-height: 12px;
}
.grid td {
    padding: 0 2px;
    background: #f2f2f2;
    border-right: 1px dotted #ccc;
}
.grid .drugname {
    overflow: visible;
}
.grid .cut {
    padding-left: 6px;
    text-align: left;
}
.c24 { width: 24px; }
.c28 { width: 28px; }
.c35 { width: 35px; }
.c42 { width: 42px; }
.c50 { width: 50px; }
.c57 { width: 57px; }
.c70 { width: 70px; }
.c110 { width: 110px; }
.c122 { width: 122px; }
.bottom {
    display: flex;
    gap: 3px;
    height: 98px;
}
.usage, .totals {
    flex: 1;
    display: flex;
    flex-direction: column;
    min-width: 0;
}
.usage-bar {
    display: flex;
    align-items: center;
    gap: 3px;
    height: 16px;
    padding-left: 3px;
    border: 1px solid #222;
}
.usage-bar select {
    height: 13px;
}
.usage-bar .icon {
    height: 14px;
}
.guide {
    width: 68px;
    height: 14px;
    border: 1px solid;
    border-color: #fff #777 #777 #fff;
    background: #e4e8ef;
}
.tabs {
    display: flex;
    height: 14px;
}
.tabs button {
    flex: 3;
    border: 0;
    border-right: 1px solid #333;
    background: none;
}
.tabs .on {
    flex: 4;
    color: #a010d8;
    font-weight: bold;
}
.memo-line {
    display: flex;
    align-items: center;
    gap: 3px;
    margin: 1px 2px;
    padding-left: 4px;
}
.ball {
    width: 9px;
    height: 8px;
    border-radius: 50%;
    background: linear-gradient(#1a6a94, #7cd4f4);
}
.upbtn {
    width: 14px;
    height: 12px;
    margin-left: auto;
    border: 1px solid #999;
    background: #eee url("data:image/svg+xml,%3Csvg xmlns='http://www.w3.org/2000/svg' width='6' height='3'%3E%3Cpath d='M0 3h6L3 0z'/%3E%3C/svg%3E") no-repeat center;
}
.usage textarea {
    flex: 1;
    margin: 1px 2px 2px;
}
.totals {
    border: 1px solid #888;
}
.sums {
    display: grid;
    grid-template-columns: 46px 1fr 60px 1fr;
    column-gap: 2px;
    padding: 1px 2px;
    border-bottom: 1px solid #888;
}
.sums .field {
    width: 100%;
    height: 12px;
    background: #e4e8ef;
    color: #2050c8;
    line-height: 10px;
}
.sums.due {
    padding: 2px 2px;
}
.sums .red-t {
    color: #d83838;
}
.sums .cash {
    background: #fff;
    color: #000;
    font-weight: bold;
}
.sums button {
    height: 12px;
    border: 1px solid;
    border-color: #fff #777 #777 #fff;
    background: #e4e8ef;
    line-height: 10px;
}
.sums label:nth-child(4n + 3) {
    padding-left: 3px;
}
.receipt {
    flex: 1;
    display: flex;
    align-items: center;
    gap: 2px;
}

/* right column */
.actions {
    display: flex;
    flex-direction: column;
    gap: 2px;
}
.actions button {
    height: 15px;
    border: 1px solid;
    border-color: #fff #666 #666 #fff;
    background: #e6eaf0;
    line-height: 12px;
}
.actions .blue {
    border-color: #1c4a7c;
    background: linear-gradient(#f4faff, #a8d4f8);
}
.actions.last {
    gap: 1px;
}
.actions.last button {
    height: 17px;
}
.prints {
    flex: 1;
    display: flex;
    flex-direction: column;
    justify-content: flex-end;
    padding-bottom: 2px;
    font-size: 10px;
    line-height: 10px;
}
.prints h3 {
    display: flex;
    align-items: center;
    gap: 6px;
    height: 13px;
    border-bottom: 1px solid #c4c8d0;
    font-size: 10px;
}
.prints .check {
    flex: none;
    height: 10px;
}
.prints .check input {
    margin-right: 5px;
}
.prints .check label {
    margin-right: 3px;
}
.prints .check button {
    flex: 1;
    height: 10px;
    border: 1px solid;
    border-color: #fff #777 #777 #fff;
    background: #e4e8ef;
    line-height: 8px;
}
.prints .rule {
    height: 14px;
    margin-top: 2px;
    border-top: 1px solid #c4c8d0;
}
.radios {
    display: flex;
    justify-content: space-around;
    padding: 1px 0;
    border: 1px solid #aaa;
}

/* status bar */
.status {
    display: flex;
    height: 13px;
    border-top: 1px solid #aaa;
    background: #efefef;
    line-height: 11px;
}
.status span {
    width: 84px;
    padding-left: 4px;
    border-left: 1px solid #999;
}
.status .login {
    flex: 1;
    padding-left: 3px;
    border: 0;
}
.status .caps {
    color: #999;
}
.status span:last-child {
    width: 97px;
}

/* pop-up windows lie over the workspace */
.dialog {
    position: absolute;
    display: flex;
    flex-direction: column;
    border: 1px solid #aaa;
    box-shadow: 2px 3px 8px rgba(0, 0, 0, .5);
}
.dialog header {
    display: flex;
    align-items: center;
    background: #fff;
}
.cancel {
    left: 306px;
    top: 196px;
    width: 255px;
    background: #e9edf5;
}
.cancel header {
    height: 16px;
    padding-left: 3px;
    color: #999;
}
.cancel h2 {
    display: flex;
    align-items: center;
    gap: 4px;
    height: 21px;
    padding-left: 11px;
    font-size: 14px;
}
.cancel h2 svg {
    width: 11px;
    height: 10px;
}
.reason {
    display: flex;
    align-items: center;
    gap: 4px;
    height: 28px;
    margin: 0 12px 0 10px;
    padding: 0 5px 0 7px;
    border: 1px solid #a8b4cc;
}
.reason i {
    width: 6px;
    height: 6px;
    border-radius: 50%;
    background: #2a6ac0;
}
.reason label {
    font-size: 12px;
    font-weight: bold;
}
.reason select {
    flex: 1;
    height: 18px;
    padding: 0 2px;
    appearance: none;
    border: 2px solid #e8202c;
    background: #fff url("data:image/svg+xml,%3Csvg xmlns='http://www.w3.org/2000/svg' width='9' height='5'%3E%3Cpath d='M1 1l3.500 3L8 1' fill='none' stroke='%23555'/%3E%3C/svg%3E") no-repeat right 4px center;
}
.dialog-btns {
    display: flex;
    gap: 5px;
    padding: 3px 12px 6px 50px;
}
.dialog-btns button {
    flex: 1;
    height: 20px;
    border: 1px solid #a8b4cc;
    background: #e9edf5;
    color: #999;
}
.message {
    left: 473px;
    top: 261px;
    width: 196px;
    border-color: #2a8ad8;
    background: #fff;
}
.message header {
    justify-content: space-between;
    height: 16px;
    padding: 0 8px 0 3px;
}
.message header button {
    width: 10px;
    height: 10px;
    border: 0;
    background: none;
}
.message header svg {
    display: block;
    width: 10px;
    height: 10px;
}
.message p {
    display: flex;
    align-items: center;
    gap: 8px;
    height: 51px;
    padding-left: 19px;
}
.message p svg {
    width: 26px;
    height: 20px;
}
.message footer {
    display: flex;
    justify-content: flex-end;
    padding: 7px 12px 6px;
    background: #efefef;
}
.message footer button {
    width: 65px;
    height: 14px;
    border: 2px solid #e8202c;
    background: #e4e4e4;
    font-size: 10px;
    line-height: 10px;
}

/* step numbers */
.badge {
    position: absolute;
    width: 34px;
    height: 26px;
    border-radius: 50%;
    background: #e98f45;
    color: #fff;
    font: bold 13px/26px "Liberation Sans", sans-serif;
    text-align: center;
    box-shadow: 1px 1px 2px rgba(0, 0, 0, .3);
}
.n1 { left: 8px; top: 283px; }
.n2 { left: 201px; top: 243px; }
.n3 { left: 543px; top: 181px; }
.n4 { left: 457px; top: 339px; }
```
